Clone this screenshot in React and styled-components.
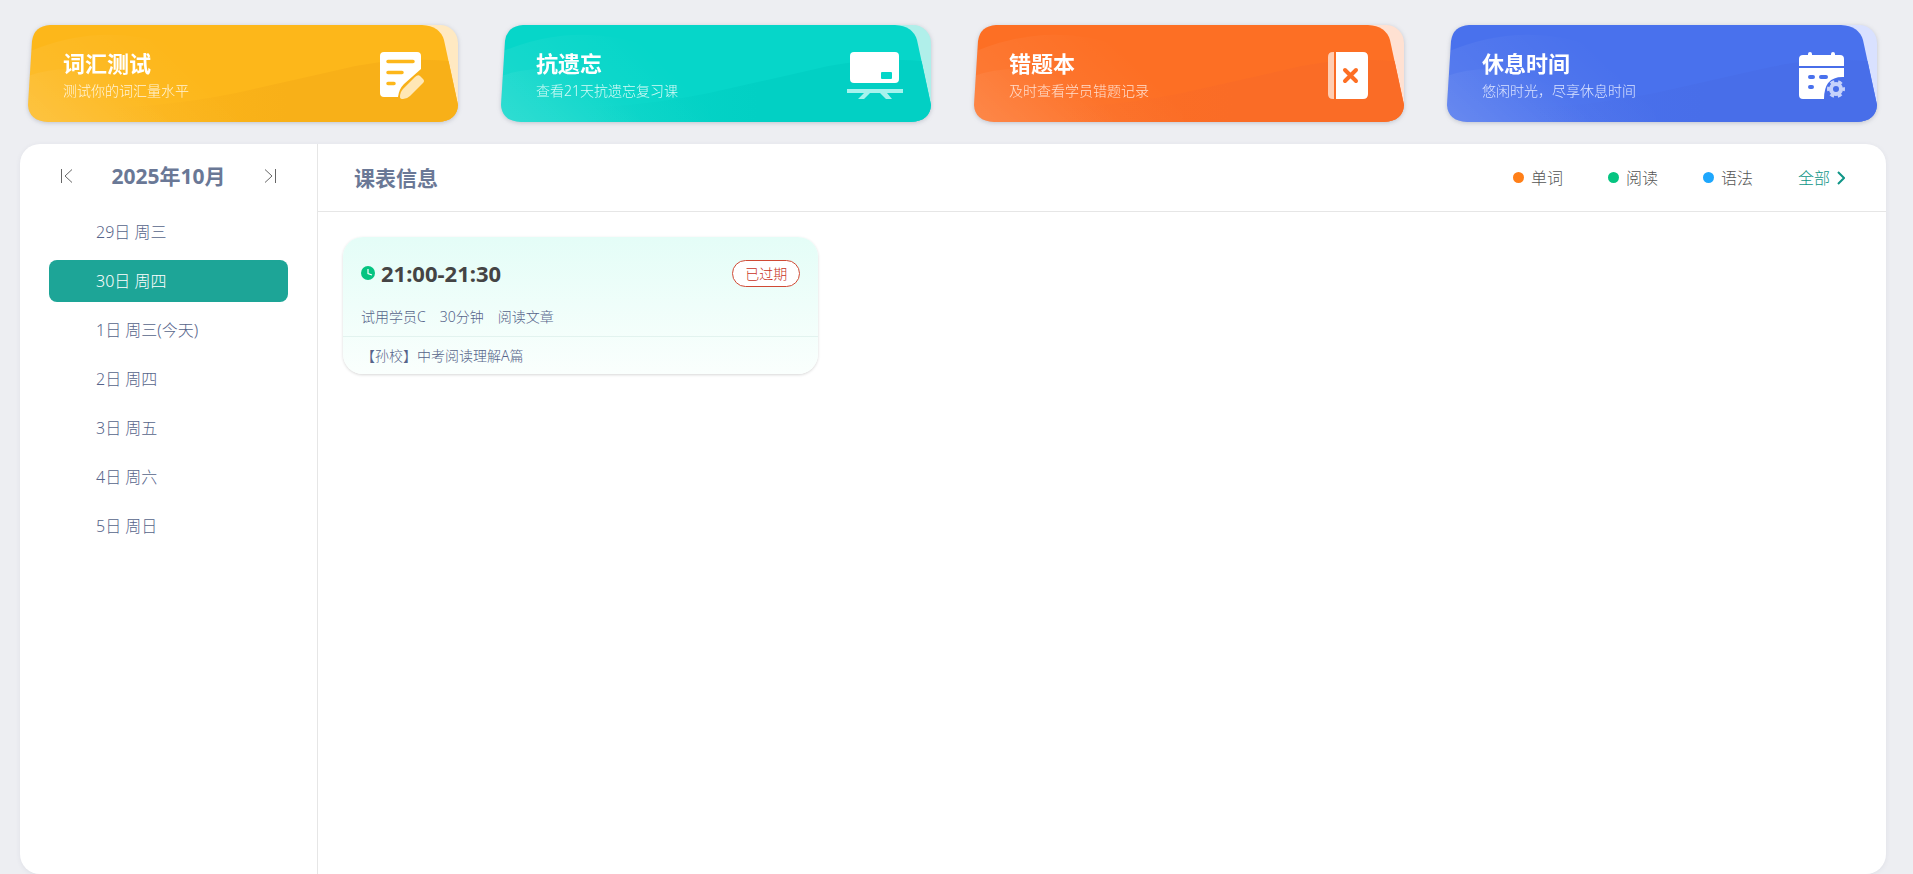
import React from "react";
import styled, { createGlobalStyle } from "styled-components";

const GlobalStyle = createGlobalStyle`
	* {
		box-sizing: border-box;
	}
	body {
		margin: 0;
		background-color: #edeef2;
		font-family: "Noto Sans", "Noto Sans CJK SC", sans-serif;
		font-weight: 300;
		color: #56648a;
	}
	button {
		font: inherit;
		border: none;
		background: none;
		padding: 0;
		cursor: pointer;
	}
	ul {
		list-style: none;
		margin: 0;
		padding: 0;
	}
`;

const Page = styled.div`
	display: flex;
	flex-direction: column;
	min-height: 100vh;
	padding: 25px 27px 0 20px;
`;

const Entries = styled.nav`
	display: grid;
	grid-template-columns: repeat(4, 1fr);
	gap: 43px;
	padding: 0 9px 0 8px;
	margin-bottom: 22px;
`;

const Entry = styled.a`
	position: relative;
	display: flex;
	align-items: center;
	justify-content: space-between;
	height: 97px;
	padding: 3px 26px 0 35px;
	border-radius: 18px;
	color: white;
	text-decoration: none;
	filter: drop-shadow(0 1px 2px rgba(60, 70, 100, 0.25));
`;

const Backdrop = styled.svg`
	position: absolute;
	inset: 0;
	width: 100%;
	height: 100%;
`;

const EntryText = styled.div`
	position: relative;
	display: flex;
	flex-direction: column;
`;

const EntryTitle = styled.strong`
	font-size: 22px;
	line-height: 32px;
	font-weight: 700;
`;

const EntryNote = styled.span`
	font-size: 14px;
	line-height: 24px;
	color: ${(props) => props.$color};
`;

const EntryIcon = styled.svg`
	position: relative;
	width: 60px;
	height: 48px;
`;

const Panel = styled.main`
	display: flex;
	flex: 1;
	background-color: white;
	border-radius: 20px;
	box-shadow: 0 1px 5px rgba(60, 70, 100, 0.08);
`;

const Sidebar = styled.aside`
	width: 298px;
	flex-shrink: 0;
	border-right: 1px solid #e6e6e6;
	padding: 0 29px;
`;

const MonthBar = styled.div`
	display: flex;
	align-items: center;
	justify-content: space-between;
	height: 64px;
	padding: 0 10px;
	margin-bottom: 3px;
`;

const MonthButton = styled.button`
	display: flex;
	color: #666;
`;

const Month = styled.h2`
	margin: 0;
	font-size: 21px;
	line-height: 30px;
	color: #6a7896;
`;

const DayList = styled.ul`
	display: flex;
	flex-direction: column;
	gap: 7px;
`;

const Day = styled.button`
	width: 100%;
	height: 42px;
	padding-left: 47px;
	border-radius: 8px;
	text-align: left;
	font-size: 16px;
	line-height: 24px;
	color: ${(props) => (props.$current ? "white" : "#56648a")};
	background-color: ${(props) => (props.$current ? "#1da597" : "transparent")};
`;

const Content = styled.section`
	flex: 1;
	min-width: 0;
`;

const ContentHeader = styled.header`
	display: flex;
	align-items: center;
	justify-content: space-between;
	height: 68px;
	padding: 0 41px 0 36px;
	border-bottom: 1px solid #e6e6e6;
`;

const ContentTitle = styled.h1`
	margin: 0;
	font-size: 21px;
	line-height: 30px;
	color: #6a7896;
`;

const Legend = styled.ul`
	display: flex;
	align-items: center;
	gap: 45px;
	font-size: 16px;
	line-height: 24px;
	color: #555;
`;

const LegendItem = styled.li`
	display: flex;
	align-items: center;
	gap: 7px;
`;

const Dot = styled.span`
	width: 11px;
	height: 11px;
	border-radius: 50%;
	background-color: ${(props) => props.$color};
`;

const AllLink = styled.a`
	display: flex;
	align-items: center;
	gap: 7px;
	color: #0f9587;
	text-decoration: none;
`;

const Lessons = styled.div`
	display: grid;
	grid-template-columns: repeat(3, 1fr);
	gap: 46px;
	padding: 25px;
`;

const Lesson = styled.article`
	border-radius: 20px;
	background: linear-gradient(#e4fdf7, #fafffd);
	box-shadow: 0 1px 3px rgba(0, 0, 0, 0.16);
`;

const LessonTop = styled.div`
	display: flex;
	align-items: center;
	height: 72px;
	padding: 0 18px;
	gap: 6px;
`;

const LessonTime = styled.h3`
	flex: 1;
	margin: 0;
	font-size: 22px;
	line-height: 30px;
	color: #444;
`;

const Badge = styled.span`
	height: 27px;
	padding: 0 12px;
	border: 1px solid #d04a35;
	border-radius: 14px;
	background-color: white;
	font-size: 14px;
	line-height: 25px;
	color: #c8321c;
`;

const LessonMeta = styled.div`
	display: flex;
	gap: 14px;
	padding: 0 18px 11px;
	font-size: 14px;
	line-height: 16px;
	border-bottom: 1px solid #e2f3ef;
`;

const LessonName = styled.p`
	margin: 0;
	padding: 0 18px;
	font-size: 14px;
	line-height: 37px;
`;

const entries = [
	{
		id: "vocab",
		title: "词汇测试",
		note: "测试你的词汇量水平",
		color: "#fdb71a",
		dark: "#f8b018",
		pale: "#ffe9c2",
		noteColor: "#fff4d8",
	},
	{
		id: "memory",
		title: "抗遗忘",
		note: "查看21天抗遗忘复习课",
		color: "#06d6c9",
		dark: "#02d0c4",
		pale: "#b0efea",
		noteColor: "#d4fbf7",
	},
	{
		id: "mistakes",
		title: "错题本",
		note: "及时查看学员错题记录",
		color: "#fd6f24",
		dark: "#fa6c26",
		pale: "#ffe1d2",
		noteColor: "#ffe0d0",
	},
	{
		id: "rest",
		title: "休息时间",
		note: "悠闲时光，尽享休息时间",
		color: "#4971ed",
		dark: "#486ee9",
		pale: "#d9e1ff",
		noteColor: "#dce4ff",
	},
];

const icons = {
	vocab: ({ color }) => (
		<>
			<path
				d="M12 1h33q4 0 4 4v13L32 33q-5 5-6 13H12q-4 0-4-4V5q0-4 4-4z"
				fill="white"
			/>
			<path
				d="M16 10.500h25M16 21.500h14M16 32.500h6"
				stroke={color}
				strokeWidth="3.500"
				strokeLinecap="round"
			/>
			<path
				d="M31 38L43 26q3-3 5-1l3 3q2 2 0 4L38 45q-3 3-7 3-3 0-3-2 0-5 3-8z"
				fill="#ffe7b5"
			/>
		</>
	),
	memory: ({ color }) => (
		<>
			<rect x="5" y="1" width="49" height="31" rx="4" fill="white" />
			<rect x="36" y="21" width="11" height="7" rx="1" fill={color} />
			<path
				d="M2 38h56v4H42l5 6h-6l-6-6H25l-6 6h-6l6-6H2z"
				fill="#a6f3ed"
			/>
		</>
	),
	mistakes: ({ color }) => (
		<>
			<path d="M16 1h-1q-5 0-5 5v37q0 5 5 5h1z" fill="#ffcdb2" />
			<path d="M18 1h27q5 0 5 5v37q0 5-5 5H18z" fill="white" />
			<path
				d="M27 19l11 11M38 19L27 30"
				stroke={color}
				strokeWidth="4"
				strokeLinecap="round"
			/>
		</>
	),
	rest: ({ color }) => (
		<>
			<path
				d="M12 4h5V3q0-2 2-2t2 2v1h19V3q0-2 2-2t2 2v1h5q4 0 4 4v7H8V8q0-4 4-4z"
				fill="white"
			/>
			<path d="M8 17h45v9q-20-1-20 22H12q-4 0-4-4z" fill="white" />
			<path
				d="M19 26h3M30 26h5M19 36h2"
				stroke={color}
				strokeWidth="4"
				strokeLinecap="round"
			/>
			<circle cx="45" cy="38" r="5" fill="none" stroke="#c6d2fb" strokeWidth="4" />
			<circle
				cx="45"
				cy="38"
				r="7.500"
				fill="none"
				stroke="#c6d2fb"
				strokeWidth="3"
				strokeDasharray="4 3.854"
				strokeDashoffset="2"
			/>
		</>
	),
};

const CardShape = ({ id, color, dark, pale }) => (
	<Backdrop viewBox="0 0 430 97" preserveAspectRatio="none" aria-hidden="true">
		<defs>
			<linearGradient id={`${id}-glow`} x1="0" y1="1" x2="0.9" y2="0.6">
				<stop offset="0" stopColor="white" stopOpacity="0.09" />
				<stop offset="1" stopColor="white" stopOpacity="0" />
			</linearGradient>
			<linearGradient id={`${id}-wave`} x1="0" y1="0" x2="1" y2="0">
				<stop offset="0.2" stopColor={dark} stopOpacity="0" />
				<stop offset="0.6" stopColor={dark} />
			</linearGradient>
			<clipPath id={`${id}-clip`}>
				<path d="M22 0H394Q412 1 416 15L430 80Q429 96 410 97H20Q1 96 0 80L4 16Q6 1 22 0Z" />
			</clipPath>
		</defs>
		<rect x="360" width="70" height="94" rx="18" fill={pale} />
		<g clipPath={`url(#${id}-clip)`}>
			<rect width="430" height="97" fill={color} />
			<path
				d="M0 82Q110 88 208 68L310 45Q370 30 430 37V97H0Z"
				fill={`url(#${id}-wave)`}
			/>
			<path d="M0 27Q75-5 150 22Q200 42 210 97H0Z" fill={`url(#${id}-glow)`} />
			<path d="M0 51Q50 34 100 59Q130 75 140 97H0Z" fill={`url(#${id}-glow)`} />
		</g>
	</Backdrop>
);

const legend = [
	{ label: "单词", color: "#ff7f18" },
	{ label: "阅读", color: "#05c481" },
	{ label: "语法", color: "#1ea7fd" },
];

const days = [
	"29日 周三",
	"30日 周四",
	"1日 周三(今天)",
	"2日 周四",
	"3日 周五",
	"4日 周六",
	"5日 周日",
];

const App = () => (
	<>
		<GlobalStyle />
		<Page>
			<Entries>
				{entries.map((entry) => {
					const Icon = icons[entry.id];
					return (
						<Entry key={entry.id} href={`#${entry.id}`}>
							<CardShape {...entry} />
							<EntryText>
								<EntryTitle>{entry.title}</EntryTitle>
								<EntryNote $color={entry.noteColor}>{entry.note}</EntryNote>
							</EntryText>
							<EntryIcon viewBox="0 0 60 48" aria-hidden="true">
								<Icon color={entry.color} />
							</EntryIcon>
						</Entry>
					);
				})}
			</Entries>
			<Panel>
				<Sidebar>
					<MonthBar>
						<MonthButton aria-label="上个月">
							<svg width="16" height="16" fill="none" stroke="currentColor">
								<path d="M2.500 1v14M13 1.500L6 8l7 6.500" />
							</svg>
						</MonthButton>
						<Month>2025年10月</Month>
						<MonthButton aria-label="下个月">
							<svg width="16" height="16" fill="none" stroke="currentColor">
								<path d="M13.500 1v14M3 1.500L10 8l-7 6.500" />
							</svg>
						</MonthButton>
					</MonthBar>
					<DayList>
						{days.map((day, index) => (
							<li key={day}>
								<Day $current={index === 1}>{day}</Day>
							</li>
						))}
					</DayList>
				</Sidebar>
				<Content>
					<ContentHeader>
						<ContentTitle>课表信息</ContentTitle>
						<Legend>
							{legend.map(({ label, color }) => (
								<LegendItem key={label}>
									<Dot $color={color} />
									{label}
								</LegendItem>
							))}
							<li>
								<AllLink href="#all">
									全部
									<svg
										width="8"
										height="14"
										fill="none"
										stroke="currentColor"
										strokeWidth="2"
									>
										<path d="M1 1l6 6-6 6" />
									</svg>
								</AllLink>
							</li>
						</Legend>
					</ContentHeader>
					<Lessons>
						<Lesson>
							<LessonTop>
								<svg width="14" height="14" aria-hidden="true">
									<circle cx="7" cy="7" r="7" fill="#05c481" />
									<path
										d="M7 3v4.500l4 1.500"
										fill="none"
										stroke="white"
										strokeWidth="1.200"
									/>
								</svg>
								<LessonTime>21:00-21:30</LessonTime>
								<Badge>已过期</Badge>
							</LessonTop>
							<LessonMeta>
								<span>试用学员C</span>
								<span>30分钟</span>
								<span>阅读文章</span>
							</LessonMeta>
							<LessonName>【孙校】中考阅读理解A篇</LessonName>
						</Lesson>
					</Lessons>
				</Content>
			</Panel>
		</Page>
	</>
);

export default App;
